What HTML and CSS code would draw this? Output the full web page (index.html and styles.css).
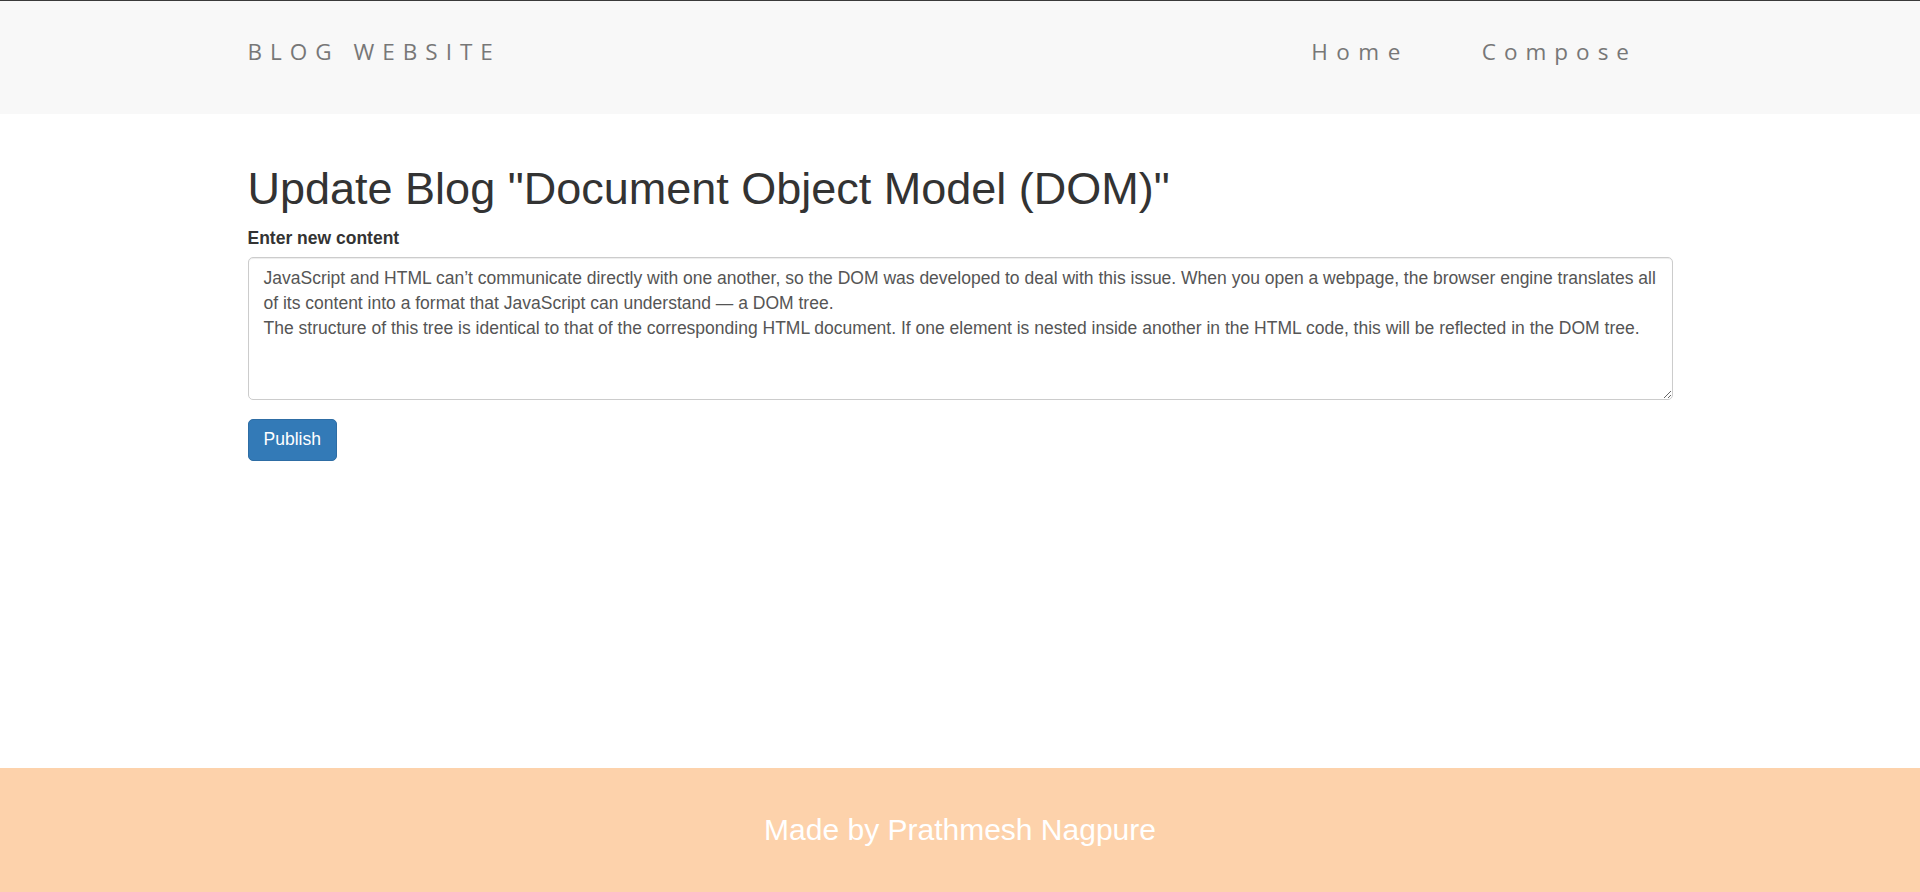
FILE: index.html
```html
<!DOCTYPE html>
<html lang="en">
<head>
<meta charset="utf-8">
<title>Blog Website</title>
<link rel="stylesheet" href="styles.css">
</head>
<body>
<header class="navbar">
  <div class="container nav-inner">
    <a class="brand" href="#">BLOG WEBSITE</a>
    <ul class="nav-links">
      <li><a href="#">Home</a></li>
      <li><a href="#">Compose</a></li>
    </ul>
  </div>
</header>
<main class="container main">
  <h1 class="title">Update Blog "Document Object Model (DOM)"</h1>
  <form class="form">
    <div class="form-group">
      <label class="label" for="content">Enter new content</label>
      <textarea id="content" class="form-control" rows="5">JavaScript and HTML can’t communicate directly with one another, so the DOM was developed to deal with this issue. When you open a webpage, the browser engine translates all of its content into a format that JavaScript can understand — a DOM tree.
The structure of this tree is identical to that of the corresponding HTML document. If one element is nested inside another in the HTML code, this will be reflected in the DOM tree.</textarea>
    </div>
    <button type="button" class="btn-primary">Publish</button>
  </form>
</main>
<footer class="footer">
  <p class="footer-text">Made by Prathmesh Nagpure</p>
</footer>
</body>
</html>
```
FILE: styles.css
```css
* { box-sizing: border-box; }
html, body { margin: 0; padding: 0; }
body {
  font-family: "Liberation Sans", Arial, Helvetica, sans-serif;
  font-size: 17.5px;
  line-height: 25px;
  color: #333;
  background: #fff;
  min-height: 100vh;
  display: flex;
  flex-direction: column;
}
.container {
  width: 100%;
  max-width: 1462.5px;
  margin: 0 auto;
  padding: 0 18.75px;
}
.navbar {
  background: #f8f8f8;
  border-top: 1px solid #3a3a3a;
  height: 114px;
  display: flex;
}
.nav-inner {
  display: flex;
  align-items: center;
  justify-content: space-between;
  padding-bottom: 13px;
}
.brand, .nav-links a {
  font-family: "Open Sans", "Noto Sans", sans-serif;
  font-size: 22.5px;
  line-height: 25px;
  letter-spacing: 8px;
  color: #777;
  text-decoration: none;
}
.nav-links {
  list-style: none;
  margin: 0;
  padding: 0;
  display: flex;
}
.nav-links a {
  display: block;
  padding: 0 35px;
}
.nav-links li:first-child a { padding-right: 38px; letter-spacing: 8.5px; }
.nav-links li:last-child a { padding-right: 35.5px; }
.main { flex: 1; }
.title {
  font-size: 45px;
  line-height: 49.5px;
  font-weight: 400;
  margin: 50px 0 12.5px;
}
.form-group { margin-bottom: 18.75px; }
.label {
  display: inline-block;
  font-weight: 700;
  margin-bottom: 6.25px;
}
.form-control {
  display: block;
  width: 100%;
  height: 142.5px;
  padding: 7.5px 15px;
  font-family: "Liberation Sans", Arial, Helvetica, sans-serif;
  font-size: 17.5px;
  line-height: 25px;
  color: #555;
  background: #fff;
  border: 1.25px solid #ccc;
  border-radius: 5px;
  box-shadow: inset 0 1px 1px rgba(0,0,0,.075);
  resize: vertical;
}
.btn-primary {
  font-family: "Liberation Sans", Arial, Helvetica, sans-serif;
  font-size: 17.5px;
  line-height: 25px;
  padding: 7.5px 15px;
  color: #fff;
  background: #337ab7;
  border: 1.25px solid #2e6da4;
  border-radius: 5px;
  cursor: pointer;
}
.footer {
  background: #fdd2ab;
  height: 124px;
  display: flex;
  align-items: center;
  justify-content: center;
}
.footer-text {
  margin: 0;
  color: #fff;
  font-size: 30px;
  line-height: 34px;
}
```
